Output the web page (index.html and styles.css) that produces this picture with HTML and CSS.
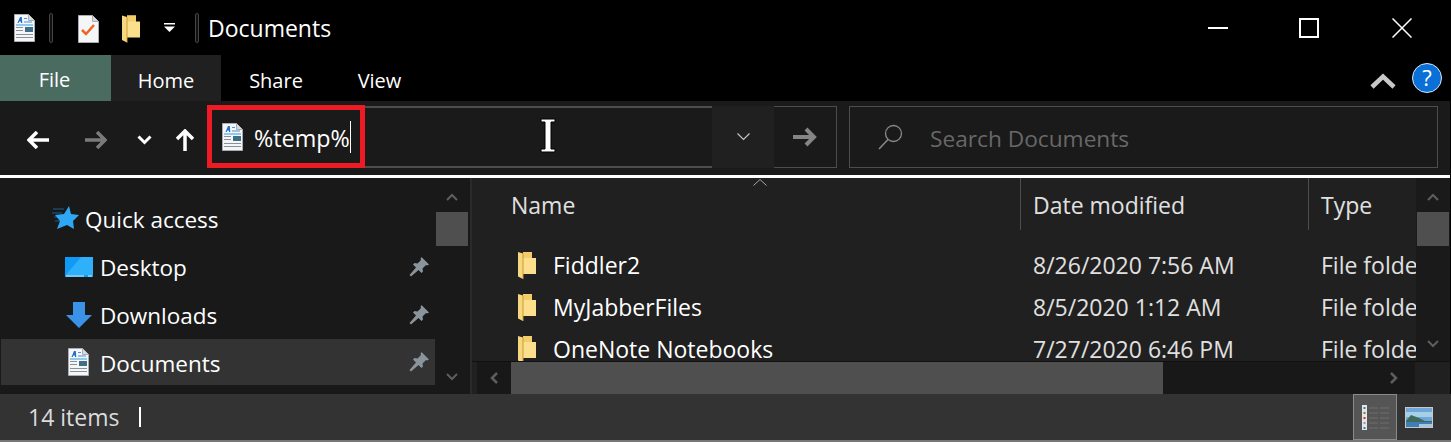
FILE: index.html
```html
<!DOCTYPE html>
<html lang="en">
<head>
    <meta charset="UTF-8">
    <meta name="viewport" content="width=device-width, initial-scale=1.0">
    <title>Documents</title>
    <link rel="stylesheet" href="styles.css">
</head>
<body>
    <svg class="defs" width="0" height="0">
        <defs>
            <symbol id="doc" viewBox="0 0 21 28">
                <path d="M.5.5h14l6 6v21H.5z" fill="#f4f6f8" stroke="#a9adb3"/>
                <path d="M14.5.5v6h6" fill="#d5d9de" stroke="#a9adb3"/>
                <path d="M3.500 9l2.500-6h1.800l.5 6H7l-.1-1.500H5.300L4.700 9z" fill="#1f6fd0"/>
                <path d="M10 4.500h3M10 8h8" stroke="#4a93d8"/>
                <path d="M2 11h17" stroke="#2f9be0"/>
                <rect x="11" y="13" width="8" height="5" fill="#3f6f86"/>
                <path d="M2 13.500h7M2 16.500h7M2 20.500h17M2 23.500h17" stroke="#8b9097"/>
            </symbol>
            <symbol id="folder" viewBox="0 0 18 27">
                <path d="M5 0h9v6h4v16H5z" fill="#fcdf8d"/>
                <path d="M5 0h9v6H5z" fill="#f3cd6b"/>
                <path d="M0 0l5 1.500V27L0 24.500z" fill="#f6d77f"/>
                <path d="M5 1.500V27" stroke="#c99b36"/>
            </symbol>
            <symbol id="pin" viewBox="0 0 20 20">
                <path d="M12.500 0L20 7.500l-2 1-1-.5-3.500 3.500.5 3-1.500 1.500-3-3L2 19.500.5 18l6.500-7.500-3-3L5.500 6l3 .5L12 3l-.5-1z" fill="#8b949b"/>
            </symbol>
        </defs>
    </svg>

    <div class="window">
        <header class="titlebar">
            <svg class="qat-doc" width="21" height="28"><use href="#doc"/></svg>
            <span class="qat-sep"></span>
            <svg class="qat-check" width="21" height="28" viewBox="0 0 21 28">
                <path d="M.5.5h14l6 6v21H.5z" fill="#f4f6f8" stroke="#a9adb3"/>
                <path d="M14.500.5v6h6" fill="#d5d9de" stroke="#a9adb3"/>
                <path d="M4 15l4 4 8-9" fill="none" stroke="#f0641e" stroke-width="2.500"/>
            </svg>
            <svg class="qat-folder" width="18" height="28"><use href="#folder"/></svg>
            <svg class="qat-drop" width="11" height="9" viewBox="0 0 11 9">
                <path d="M0 0h11v1.500H0zM0 3.500h11L5.500 9z" fill="#fff"/>
            </svg>
            <span class="qat-sep qat-sep-2"></span>
            <span class="title">Documents</span>
            <div class="winctrls">
                <svg width="20" height="20" viewBox="0 0 20 20"><path d="M0 9h20v2H0z" fill="#fff"/></svg>
                <svg class="win-max" width="20" height="20" viewBox="0 0 20 20"><path d="M1 1h18v18H1z" fill="none" stroke="#fff" stroke-width="2"/></svg>
                <svg width="20" height="20" viewBox="0 0 20 20"><path d="M.5.500l19 19M19.500.500l-19 19" stroke="#fff" stroke-width="1.500"/></svg>
            </div>
        </header>

        <nav class="tabs">
            <div class="tab tab-file">File</div>
            <div class="tab tab-home">Home</div>
            <div class="tab tab-share">Share</div>
            <div class="tab tab-view">View</div>
            <svg class="ribbon-toggle" width="26" height="16" viewBox="0 0 26 16">
                <path d="M2 14L13 3.500 24 14" fill="none" stroke="#c8c8c8" stroke-width="4.500"/>
            </svg>
            <div class="help">?</div>
        </nav>

        <div class="navbar">
            <div class="nav-buttons">
                <svg width="22" height="18" viewBox="0 0 22 18"><path d="M10 1L2 9l8 8M2 9h20" fill="none" stroke="#fff" stroke-width="3.500"/></svg>
                <svg class="nav-fwd" width="22" height="18" viewBox="0 0 22 18"><path d="M12 1l8 8-8 8M20 9H0" fill="none" stroke="#7b7b7b" stroke-width="3.500"/></svg>
                <svg class="nav-recent" width="15" height="10" viewBox="0 0 15 10"><path d="M1.500 1.500L7.500 7.500l6-6" fill="none" stroke="#fff" stroke-width="3"/></svg>
                <svg class="nav-up" width="18" height="22" viewBox="0 0 18 22"><path d="M1 10l8-8 8 8M9 2v20" fill="none" stroke="#fff" stroke-width="3.500"/></svg>
            </div>
            <div class="address">
                <svg width="21" height="28"><use href="#doc"/></svg>
                <span class="address-text">%temp%</span><span class="caret"></span>
            </div>
            <div class="address-drop">
                <svg width="13" height="8" viewBox="0 0 13 8"><path d="M.5.500l6 6 6-6" fill="none" stroke="#c4c4c4" stroke-width="1.200"/></svg>
            </div>
            <div class="go">
                <svg width="24" height="20" viewBox="0 0 24 20"><path d="M13 2l8 8-8 8M21 10H0" fill="none" stroke="#858585" stroke-width="4"/></svg>
            </div>
            <div class="search">
                <svg width="25" height="26" viewBox="0 0 25 26"><circle cx="15.500" cy="9.500" r="8" fill="none" stroke="#8a8a8a" stroke-width="1.300"/><path d="M10 15.500L1 25" stroke="#8a8a8a" stroke-width="1.500"/></svg>
                <span class="search-text">Search Documents</span>
            </div>
            <div class="highlight"></div>
            <svg class="ibeam" width="16" height="35" viewBox="0 0 16 35">
                <path d="M1 1h14v3h-4v27h4v3H1v-3h4V4H1z" fill="#fff" stroke="#000"/>
            </svg>
        </div>

        <main class="panes">
            <aside class="sidebar">
                <div class="side-list">
                    <div class="side-item side-quick">
                        <svg width="27" height="24" viewBox="0 0 27 24">
                            <path d="M1 3h11M0 7h10M2 11h7M3 15h6" stroke="#1b5f92"/>
                            <path d="M17 0l2 8 8 1-6 6 1 8-7-4-10 4 3-8-5-6 9-1z" fill="#2ea8f5"/>
                        </svg>
                        <span>Quick access</span>
                    </div>
                    <div class="side-item">
                        <svg class="side-icon side-desk" width="28" height="20" viewBox="0 0 28 20">
                            <rect width="28" height="20" fill="#0f9bf5"/>
                            <path d="M0 19L16 0h12v18H0z" fill="#2fb0fa"/>
                            <path d="M1 19h18M23 19h4" stroke="#e4f4ff"/>
                        </svg>
                        <span>Desktop</span>
                        <svg class="pin" width="20" height="20"><use href="#pin"/></svg>
                    </div>
                    <div class="side-item">
                        <svg class="side-icon side-down" width="26" height="26" viewBox="0 0 26 26">
                            <path d="M7 0h12v13h7L13 26 0 13h7z" fill="#3b93e8"/>
                        </svg>
                        <span>Downloads</span>
                        <svg class="pin" width="20" height="20"><use href="#pin"/></svg>
                    </div>
                    <div class="side-item side-current">
                        <svg class="side-icon side-doc" width="21" height="28"><use href="#doc"/></svg>
                        <span>Documents</span>
                        <svg class="pin" width="20" height="20"><use href="#pin"/></svg>
                    </div>
                </div>
                <div class="vscroll">
                    <svg width="12" height="8" viewBox="0 0 12 8"><path d="M1 7l5-5 5 5" fill="none" stroke="#5e5e5e" stroke-width="2"/></svg>
                    <div class="thumb"></div>
                    <svg class="vscroll-down" width="12" height="8" viewBox="0 0 12 8"><path d="M1 1l5 5 5-5" fill="none" stroke="#5e5e5e" stroke-width="2"/></svg>
                </div>
            </aside>

            <section class="content">
                <div class="content-top">
                    <div class="file-area">
                        <div class="columns">
                            <div class="col col-name">Name</div>
                            <div class="col col-date">Date modified</div>
                            <div class="col col-type">Type</div>
                            <svg class="sort-mark" width="14" height="7" viewBox="0 0 14 7"><path d="M.5 6.500l6.500-6 6.500 6" fill="none" stroke="#a8a8a8"/></svg>
                        </div>
                        <div class="rows">
                            <div class="row">
                                <svg width="18" height="27"><use href="#folder"/></svg>
                                <span class="cell-name">Fiddler2</span>
                                <span class="cell-date">8/26/2020 7:56 AM</span>
                                <span class="cell-type">File folder</span>
                            </div>
                            <div class="row">
                                <svg width="18" height="27"><use href="#folder"/></svg>
                                <span class="cell-name">MyJabberFiles</span>
                                <span class="cell-date">8/5/2020 1:12 AM</span>
                                <span class="cell-type">File folder</span>
                            </div>
                            <div class="row">
                                <svg width="18" height="27"><use href="#folder"/></svg>
                                <span class="cell-name">OneNote Notebooks</span>
                                <span class="cell-date">7/27/2020 6:46 PM</span>
                                <span class="cell-type">File folder</span>
                            </div>
                        </div>
                    </div>
                    <div class="vscroll vscroll-main">
                        <svg width="12" height="8" viewBox="0 0 12 8"><path d="M1 7l5-5 5 5" fill="none" stroke="#5e5e5e" stroke-width="2"/></svg>
                        <div class="thumb"></div>
                        <svg class="vscroll-down" width="12" height="8" viewBox="0 0 12 8"><path d="M1 1l5 5 5-5" fill="none" stroke="#5e5e5e" stroke-width="2"/></svg>
                    </div>
                </div>
                <div class="hscroll">
                    <div class="hscroll-btn"><svg width="8" height="12" viewBox="0 0 8 12"><path d="M7 1L2 6l5 5" fill="none" stroke="#5e5e5e" stroke-width="2.500"/></svg></div>
                    <div class="hscroll-thumb"></div>
                    <div class="hscroll-track"><svg width="8" height="12" viewBox="0 0 8 12"><path d="M1 1l5 5-5 5" fill="none" stroke="#5e5e5e" stroke-width="2.500"/></svg></div>
                    <div class="hscroll-corner"></div>
                </div>
            </section>
        </main>

        <footer class="statusbar">
            <span class="count">14 items</span>
            <span class="status-sep"></span>
            <div class="view-detail">
                <svg width="27" height="25" viewBox="0 0 27 25">
                    <rect x="0" y="0" width="5" height="25" fill="#e6e6e6"/>
                    <rect x="1.500" y="2" width="2" height="2" fill="#2f7fc0"/>
                    <rect x="1.500" y="7" width="2" height="2" fill="#8a7a2a"/>
                    <rect x="1.500" y="12" width="2" height="2" fill="#c0392b"/>
                    <rect x="1.500" y="17" width="2" height="2" fill="#7fa0b0"/>
                    <rect x="1.500" y="22" width="2" height="2" fill="#2f7fc0"/>
                    <path d="M7 3h9M18 3h9M7 8h9M18 8h9M7 13h9M18 13h9M7 18h9M18 18h9M7 23h9M18 23h9" stroke="#6e6e6e"/>
                </svg>
            </div>
            <svg class="view-thumb" width="28" height="21" viewBox="0 0 28 21">
                <rect x=".5" y=".5" width="27" height="20" fill="#6fa8d8" stroke="#c8c8c8"/>
                <path d="M1 5h26v5H1z" fill="#a6cfe8"/>
                <path d="M1 14l5-6 8 3 6 3 7 0v2H1z" fill="#3f6a5c"/>
                <path d="M1 15h26v5H1z" fill="#3f7fb5"/>
                <path d="M14 17h13v3H14z" fill="#a9c6dc"/>
            </svg>
        </footer>
    </div>
</body>
</html>
```

FILE: styles.css
```css
* {
    margin: 0;
    padding: 0;
    box-sizing: border-box;
}

html, body {
    height: 100%;
    overflow: hidden;
    background-color: #000;
}

body {
    color: #fff;
    font-family: 'Open Sans', 'Noto Sans', sans-serif;
    font-size: 23px;
}

svg {
    display: block;
    flex: none;
}

.defs {
    position: absolute;
}

.window {
    width: 1451px;
    height: 442px;
    display: flex;
    flex-direction: column;
    border-bottom: 2px solid #777;
}

/* title bar */
.titlebar {
    height: 55px;
    display: flex;
    align-items: center;
    padding-left: 14px;
}

.qat-sep {
    width: 4px;
    height: 30px;
    margin-left: 14px;
    border-radius: 2px;
    background: #111;
    border: 1px solid #444;
}

.qat-check {
    margin-left: 25px;
    margin-top: 2px;
}

.qat-folder {
    margin-left: 23px;
    margin-top: 3px;
}

.qat-drop {
    margin-left: 24px;
}

.qat-sep-2 {
    margin-left: 20px;
}

.title {
    margin-left: 9px;
    font-size: 23px;
}

.winctrls {
    margin-left: auto;
    width: 243px;
    padding-right: 39px;
    display: flex;
    justify-content: space-between;
}

.win-max {
    margin-left: -2px;
}

/* tabs */
.tabs {
    height: 46px;
    display: flex;
    align-items: center;
    padding-right: 9px;
    font-size: 20px;
}

.tab {
    height: 46px;
    line-height: 52px;
    text-align: center;
}

.tab-file {
    width: 111px;
    background: #4a6b60;
    line-height: 50px;
    padding-right: 2px;
}

.tab-home {
    width: 110px;
    background: #202020;
}

.tab-share {
    width: 110px;
}

.tab-view {
    width: 92px;
    padding-left: 5px;
}

.ribbon-toggle {
    margin-left: auto;
    margin-right: 16px;
    margin-top: 5px;
}

.help {
    width: 30px;
    height: 30px;
    border-radius: 50%;
    background: #0a70d8;
    border: 1px solid #d8e8f8;
    text-align: center;
    font-size: 22px;
    line-height: 27px;
}

/* navigation bar */
.navbar {
    position: relative;
    height: 74px;
    display: flex;
    align-items: flex-start;
    padding: 5px 12px 7px 0;
    margin-right: 1px;
    background: #1a1a1a;
}

.nav-buttons {
    width: 209px;
    height: 62px;
    padding: 6px 0 0 27px;
    display: flex;
    align-items: center;
}

.nav-fwd {
    margin-left: 36px;
}

.nav-recent {
    margin-left: 30px;
}

.nav-up {
    margin-left: 24px;
}

.address {
    width: 503px;
    height: 62px;
    display: flex;
    align-items: center;
    padding-left: 13px;
    border-top: 2px solid #4d4d4d;
    border-bottom: 2px solid #4d4d4d;
}

.address-text {
    margin-left: 11px;
    margin-top: 2px;
    font-size: 23.300px;
}

.caret {
    width: 1px;
    height: 32px;
    background: #fff;
}

.address-drop {
    width: 62px;
    height: 62px;
    background: #202020;
    display: flex;
    align-items: center;
    justify-content: center;
}

.go {
    width: 63px;
    height: 62px;
    border: 1px solid #4d4d4d;
    border-left: 0;
    display: flex;
    align-items: center;
    justify-content: center;
}

.search {
    flex: 1;
    height: 62px;
    margin-left: 12px;
    display: flex;
    align-items: center;
    padding-left: 28px;
    border: 1px solid #4d4d4d;
}

.search-text {
    margin-left: 27px;
    margin-top: 2px;
    font-size: 22.700px;
    color: #686868;
}

/* red box and mouse pointer lie over the address bar */
.highlight {
    position: absolute;
    left: 207px;
    top: 4px;
    width: 158px;
    height: 63px;
    border: 5px solid #ed1c24;
}

.ibeam {
    position: absolute;
    left: 540px;
    top: 17px;
}

/* panes */
.panes {
    flex: 1;
    min-height: 0;
    display: flex;
    border-top: 3px solid #fff;
    margin-right: 1px;
}

.sidebar {
    width: 472px;
    display: flex;
    background: #191919;
    border-right: 2px solid #2a2a2a;
}

.side-list {
    width: 434px;
    margin-left: 1px;
    padding-top: 17px;
    font-size: 22.500px;
}

.side-item {
    height: 48px;
    display: flex;
    align-items: center;
    padding-right: 6px;
}

.side-quick svg {
    margin-left: 51px;
    margin-right: 6px;
    margin-top: -2px;
}

.side-icon {
    margin-left: 64px;
}

.side-item span {
    flex: 1;
}

.side-icon + span {
    margin-left: 8px;
}

.side-desk + span {
    margin-left: 7px;
}

.side-down {
    margin-left: 65px;
}

.side-doc {
    margin-left: 67px;
}

.side-doc + span {
    margin-left: 11px;
    margin-top: 2px;
}

.side-current {
    background: #333;
    height: 46px;
}

.vscroll {
    width: 32px;
    margin-left: 1px;
    display: flex;
    flex-direction: column;
    align-items: center;
    padding-top: 15px;
}

.thumb {
    width: 32px;
    height: 34px;
    margin-top: 11px;
    background: #4f4f4f;
    flex: none;
}

.vscroll-down {
    margin-top: auto;
    margin-bottom: 13px;
}

.content {
    flex: 1;
    min-width: 0;
    display: flex;
    flex-direction: column;
    background: #202020;
}

.content-top {
    flex: 1;
    min-height: 0;
    display: flex;
}

.file-area {
    flex: 1;
    min-width: 0;
    overflow: hidden;
}

.columns {
    position: relative;
    height: 52px;
    display: flex;
    color: #e0e0e0;
}

.col {
    line-height: 54px;
    padding-left: 39px;
}

.col-name {
    width: 548px;
}

.col-date {
    width: 288px;
    padding-left: 12px;
    border-left: 1px solid #4d4d4d;
}

.col-type {
    padding-left: 12px;
    border-left: 1px solid #4d4d4d;
}

.sort-mark {
    position: absolute;
    left: 281px;
    top: 1px;
}

.rows {
    padding-top: 14px;
}

.row {
    height: 42px;
    display: flex;
    align-items: center;
    padding-left: 46px;
    white-space: nowrap;
}

.cell-name {
    flex: none;
    width: 480px;
    margin-left: 17px;
}

.cell-date {
    flex: none;
    width: 288px;
    color: #e0e0e0;
}

.cell-type {
    flex: none;
    color: #e0e0e0;
}

.vscroll-main {
    flex: none;
    width: 34px;
    margin-left: 0;
    background: #1a1a1a;
}

.hscroll {
    height: 33px;
    display: flex;
    align-items: stretch;
    border-top: 1px solid #111;
    padding-left: 5px;
}

.hscroll-btn {
    width: 34px;
    background: #181818;
    display: flex;
    align-items: center;
    justify-content: center;
}

.hscroll-thumb {
    width: 652px;
    background: #4f4f4f;
}

.hscroll-track {
    width: 252px;
    background: #181818;
    display: flex;
    align-items: center;
    justify-content: flex-end;
    padding-right: 17px;
}

.hscroll-corner {
    flex: 1;
    background: #202020;
}

/* status bar */
.statusbar {
    height: 46px;
    display: flex;
    align-items: center;
    padding-left: 28px;
    background: #333;
    color: #dcdcdc;
}

.status-sep {
    width: 2px;
    height: 20px;
    margin-left: 20px;
    background: #fff;
}

.view-detail {
    width: 44px;
    height: 46px;
    margin-left: auto;
    background: #555;
    border: 1px solid #8a8a8a;
    display: flex;
    align-items: center;
    justify-content: center;
}

.view-thumb {
    margin-left: 8px;
    margin-right: 18px;
}
```
